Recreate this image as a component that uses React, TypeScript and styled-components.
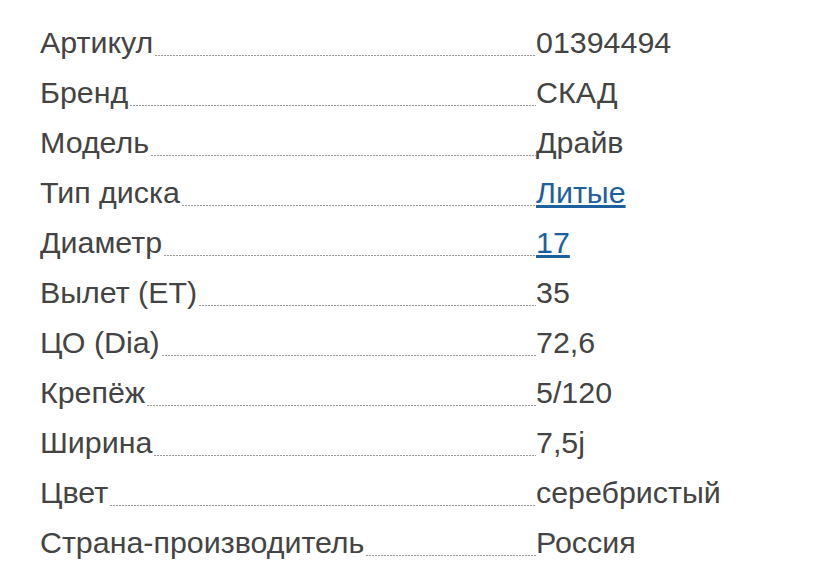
import React from "react";
import styled, { createGlobalStyle } from "styled-components";

const GlobalStyle = createGlobalStyle`
  body {
    margin: 0;
    background: #fff;
    font-family: "Liberation Sans", Arial, sans-serif;
  }
`;

type Spec = { label: string; value: string; link?: boolean };

const specs: Spec[] = [
  { label: "Артикул", value: "01394494" },
  { label: "Бренд", value: "СКАД" },
  { label: "Модель", value: "Драйв" },
  { label: "Тип диска", value: "Литые", link: true },
  { label: "Диаметр", value: "17", link: true },
  { label: "Вылет (ET)", value: "35" },
  { label: "ЦО (Dia)", value: "72,6" },
  { label: "Крепёж", value: "5/120" },
  { label: "Ширина", value: "7,5j" },
  { label: "Цвет", value: "серебристый" },
  { label: "Страна-производитель", value: "Россия" },
];

const App = () => {
  return (
    <>
      <GlobalStyle />
      <List>
        {specs.map((item) => (
          <Row key={item.label}>
            <Label>
              <LabelText>{item.label}</LabelText>
              <Leader />
            </Label>
            <Value>
              {item.link ? <ValueLink href="#">{item.value}</ValueLink> : item.value}
            </Value>
          </Row>
        ))}
      </List>
    </>
  );
};

export default App;

const List = styled.div`
  padding: 17px 0 0 40px;
`;

const Row = styled.div`
  display: grid;
  grid-template-columns: 496px 1fr;
  height: 50px;
  align-items: center;
  font-size: 30.4px;
  color: #444;
`;

const Label = styled.div`
  display: flex;
  align-items: baseline;
`;

const LabelText = styled.span`
  white-space: nowrap;
`;

const Leader = styled.span`
  flex: 1;
  height: 1px;
  margin: 0 0 0 2px;
  transform: translateY(3px);
  background-image: linear-gradient(to right, #999 2px, transparent 2px);
  background-size: 3px 1px;
  background-repeat: repeat-x;
`;

const Value = styled.div`
  white-space: nowrap;
`;

const ValueLink = styled.a`
  color: #1d609e;
  text-decoration: underline;
`;
